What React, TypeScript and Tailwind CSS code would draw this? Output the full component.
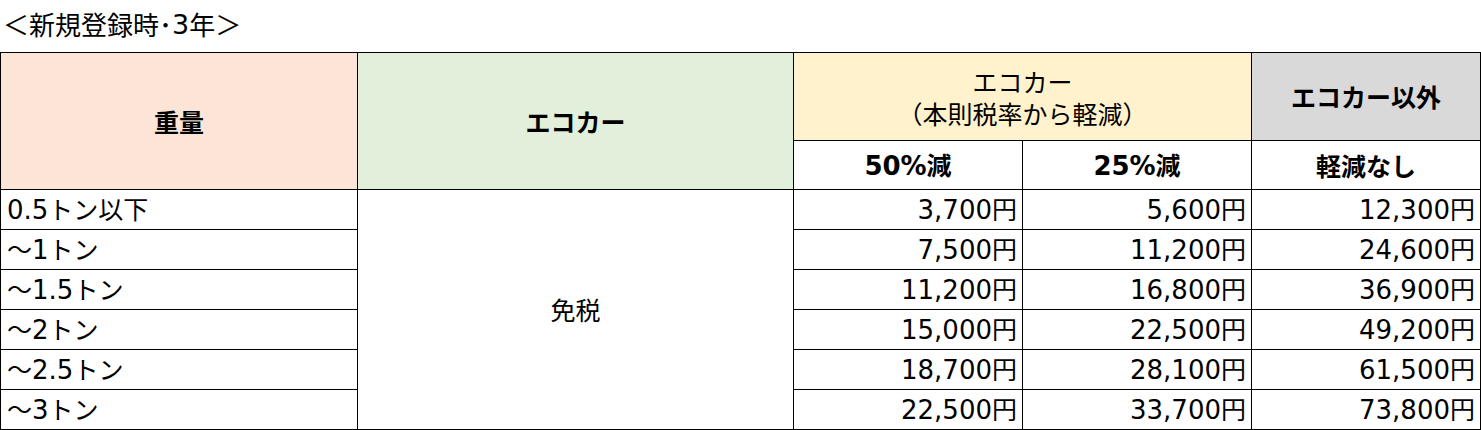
const rows = [
  { w: "0.5トン以下", a: "3,700円", b: "5,600円", c: "12,300円" },
  { w: "～1トン", a: "7,500円", b: "11,200円", c: "24,600円" },
  { w: "～1.5トン", a: "11,200円", b: "16,800円", c: "36,900円" },
  { w: "～2トン", a: "15,000円", b: "22,500円", c: "49,200円" },
  { w: "～2.5トン", a: "18,700円", b: "28,100円", c: "61,500円" },
  { w: "～3トン", a: "22,500円", b: "33,700円", c: "73,800円" },
];

// Meiryo-style wide Latin digits: put ASCII runs in DejaVu Sans
function T({ s }: { s: string }) {
  const parts = s.split(/([0-9.,%]+)/).filter(Boolean);
  return (
    <>
      {parts.map((p, i) =>
        /^[0-9.,%]+$/.test(p) ? (
          <span key={i} className="text-[26px]" style={{ fontFamily: '"DejaVu Sans", sans-serif' }}>{p}</span>
        ) : (
          <span key={i}>{p}</span>
        )
      )}
    </>
  );
}

export default function App() {
  return (
    <div className="w-[1481px] h-[430px] bg-white text-black overflow-hidden" style={{ fontFamily: '"Noto Sans CJK JP", "Noto Sans", sans-serif' }}>
      <div className="h-[52px] flex items-center pl-[3px] text-[26px] leading-none pb-[4px]">
        <span>＜新規登録時･</span>
        <span className="text-[27px]" style={{ fontFamily: '"DejaVu Sans", sans-serif' }}>3</span>
        <span>年＞</span>
      </div>
      <table className="table-fixed border-collapse text-[25px] leading-none">
        <colgroup>
          <col className="w-[357px]" />
          <col className="w-[436px]" />
          <col className="w-[229px]" />
          <col className="w-[229px]" />
          <col className="w-[229px]" />
        </colgroup>
        <thead>
          <tr className="h-[88px]">
            <th rowSpan={2} className="border border-black bg-[#fce4d6] font-bold text-center align-middle">重量</th>
            <th rowSpan={2} className="border border-black bg-[#e2efda] font-bold text-center align-middle">エコカー</th>
            <th colSpan={2} className="border border-black bg-[#fff2cc] font-normal text-center align-middle leading-[32px]">
              エコカー<br />（本則税率から軽減）
            </th>
            <th className="border border-black bg-[#d9d9d9] font-bold text-center align-middle">エコカー以外</th>
          </tr>
          <tr className="h-[49px]">
            <th className="border border-black font-bold text-center align-middle"><T s="50%減" /></th>
            <th className="border border-black font-bold text-center align-middle"><T s="25%減" /></th>
            <th className="border border-black font-bold text-center align-middle">軽減なし</th>
          </tr>
        </thead>
        <tbody>
          {rows.map((r, i) => (
            <tr key={r.w} className="h-[40px]">
              <td className="border border-black pl-[6px] text-left align-middle"><T s={r.w} /></td>
              {i === 0 && (
                <td rowSpan={6} className="border border-black text-center align-middle">免税</td>
              )}
              <td className="border border-black pr-[5px] text-right align-middle"><T s={r.a} /></td>
              <td className="border border-black pr-[5px] text-right align-middle"><T s={r.b} /></td>
              <td className="border border-black pr-[5px] text-right align-middle"><T s={r.c} /></td>
            </tr>
          ))}
        </tbody>
      </table>
    </div>
  );
}
